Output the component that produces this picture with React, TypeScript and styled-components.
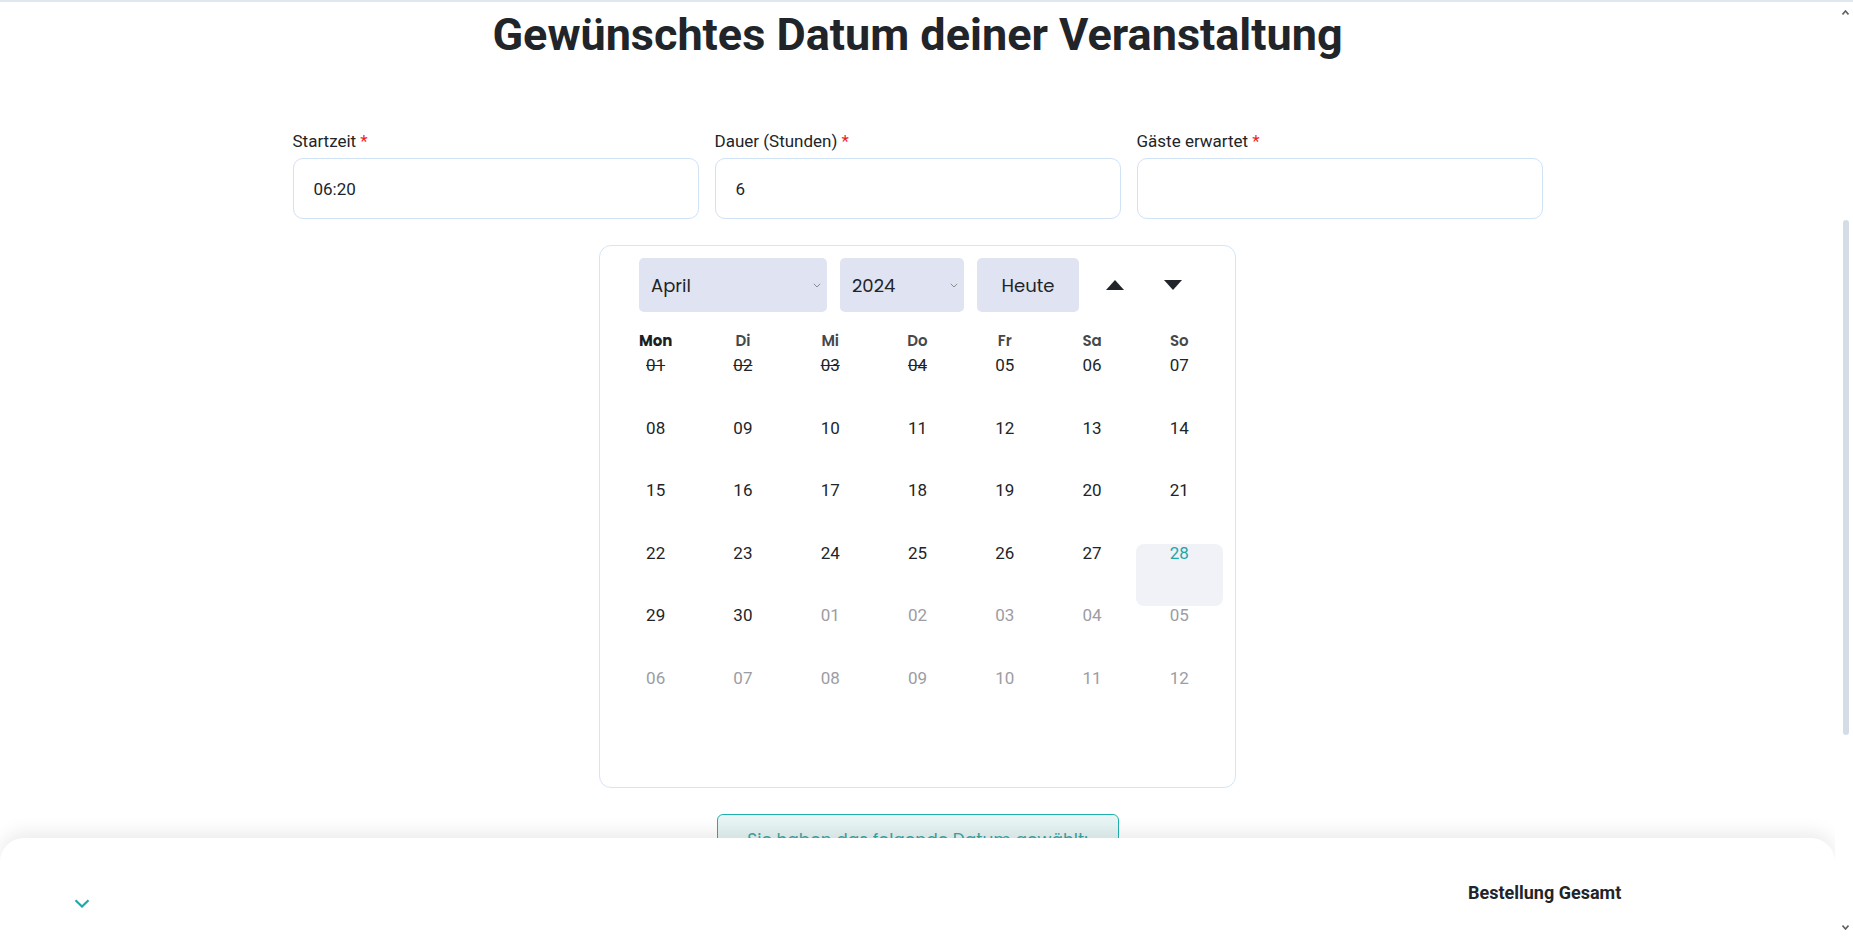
import styled, { createGlobalStyle } from "styled-components";

const GlobalStyle = createGlobalStyle`
  html, body {
    margin: 0;
    padding: 0;
    height: 100%;
    overflow: hidden;
    background: #fff;
  }
  body {
    font-family: Roboto, "Liberation Sans", sans-serif;
    color: #212529;
  }
  * {
    box-sizing: border-box;
  }
`;

const Shell = styled.div`
  display: flex;
  height: 100vh;
  border-top: 2px solid #dfe7ef;
`;

const Main = styled.main`
  flex: 1;
  margin-right: 3px;
  position: relative;
  overflow: hidden;
`;

const Title = styled.h1`
  margin: 6px 0 0;
  font: 700 45px/54px Roboto, "Liberation Sans", sans-serif;
  text-align: center;
  color: #212529;
`;

const FormRow = styled.div`
  max-width: 1250px;
  margin: 69px auto 0;
  display: grid;
  grid-template-columns: repeat(3, 1fr);
  gap: 16px;
`;

const Field = styled.label`
  display: flex;
  flex-direction: column;
`;

const LabelText = styled.span`
  font-size: 17px;
  line-height: 21px;
  margin-bottom: 6px;
  color: #212529;
`;

const Required = styled.span`
  color: #f01d1d;
  margin-left: 4px;
`;

const TextInput = styled.input`
  height: 61px;
  border: 1px solid #cfe2f6;
  border-radius: 10px;
  padding: 0 20px;
  font: 400 17px Roboto, "Liberation Sans", sans-serif;
  color: #212529;
  outline: none;
  background: #fff;
`;

const Calendar = styled.div`
  width: 637px;
  height: 543px;
  margin: 26px auto 0;
  border: 1px solid #d3e5f8;
  border-radius: 12px;
  padding: 12px 12px 0;
`;

const Toolbar = styled.div`
  display: flex;
  align-items: center;
  gap: 13px;
  padding-left: 27px;
`;

const SelectBox = styled.div<{ $width: number }>`
  width: ${(p) => p.$width}px;
  height: 54px;
  background: #e0e3f1;
  border-radius: 5px;
  display: flex;
  align-items: center;
  justify-content: space-between;
  padding: 0 6px 0 12px;
  font: 400 18px Poppins, Lato, "Noto Sans", sans-serif;
  color: #212529;
`;

const TodayButton = styled.button`
  width: 102px;
  height: 54px;
  border: none;
  background: #e0e3f1;
  border-radius: 5px;
  font: 400 18px Poppins, Lato, "Noto Sans", sans-serif;
  color: #212529;
  padding: 0;
`;

const ArrowButton = styled.button`
  width: 45px;
  height: 54px;
  border: none;
  background: none;
  padding: 0;
  display: flex;
  align-items: center;
  justify-content: center;
`;

const WeekRow = styled.div`
  margin-top: 17px;
  display: grid;
  grid-template-columns: repeat(7, 1fr);
`;

const WeekDay = styled.div<{ $first?: boolean }>`
  height: 22px;
  line-height: 22px;
  text-align: center;
  font: ${(p) => (p.$first ? 700 : 600)} 15px Poppins, Lato, "Noto Sans", sans-serif;
  color: ${(p) => (p.$first ? "#1d1f22" : "#45484c")};
`;

const DayGrid = styled.div`
  margin-top: 5px;
  display: grid;
  grid-template-columns: repeat(7, 1fr);
  grid-auto-rows: 62.6px;
`;

const DayCell = styled.div<{ $muted?: boolean; $struck?: boolean; $selected?: boolean }>`
  text-align: center;
  font-size: 17px;
  line-height: 18px;
  border-radius: 8px;
  color: ${(p) => (p.$selected ? "#22a6a6" : p.$muted ? "#9c9ca4" : "#212529")};
  background: ${(p) => (p.$selected ? "#f1f2f8" : "transparent")};
  text-decoration: ${(p) => (p.$struck ? "line-through" : "none")};
`;

const ChosenBox = styled.div`
  width: 402px;
  margin: 26px auto 0;
  border: 1px solid #20b0ae;
  border-radius: 6px;
  padding: 12px 0 20px;
  text-align: center;
  font: 400 17px/26px Poppins, Lato, "Noto Sans", sans-serif;
  color: #38a6a6;
  background: linear-gradient(#e8f5f4, #dbeeed);
`;

const Footer = styled.footer`
  position: absolute;
  left: 0;
  right: 0;
  bottom: 0;
  height: 100px;
  background: #fff;
  border-radius: 24px 24px 0 0;
  box-shadow: 0 -6px 18px rgba(0, 0, 0, 0.08);
  display: flex;
  align-items: flex-start;
  z-index: 2;
`;

const Toggle = styled.button`
  margin: 61px 0 0 74px;
  padding: 0;
  border: none;
  background: none;
  display: flex;
`;

const Summary = styled.div`
  margin-left: auto;
  width: 367px;
  margin-top: 44px;
  font: 700 18px/22px Roboto, "Liberation Sans", sans-serif;
  color: #212529;
`;

const ScrollTrack = styled.div`
  width: 15px;
  display: flex;
  flex-direction: column;
  align-items: center;
  padding: 8px 0;
`;

const Thumb = styled.div`
  width: 6px;
  height: 515px;
  margin-top: 205px;
  border-radius: 3px;
  background: #d4dde6;
`;

const Spacer = styled.div`
  flex: 1;
`;

const SelectChevron = () => (
  <svg width="8" height="5" viewBox="0 0 8 5">
    <path d="M0.8 0.8L4 4L7.2 0.8" stroke="#8c8c8c" strokeWidth="1" fill="none" />
  </svg>
);

const Triangle = ({ up }: { up?: boolean }) => (
  <svg width="18" height="10" viewBox="0 0 18 10">
    <polygon points={up ? "9,0 18,10 0,10" : "0,0 18,0 9,10"} fill="#212529" />
  </svg>
);

const ScrollArrow = ({ up }: { up?: boolean }) => (
  <svg width="7" height="5" viewBox="0 0 7 5">
    <path d={up ? "M0.5 4.5L3.5 1L6.5 4.5" : "M0.5 0.5L3.5 4L6.5 0.5"} stroke="#606060" strokeWidth="1.6" fill="none" />
  </svg>
);

const weekDays = ["Mon", "Di", "Mi", "Do", "Fr", "Sa", "So"];

type Day = { label: string; muted?: boolean; struck?: boolean; selected?: boolean };

const days: Day[] = [
  ...Array.from({ length: 30 }, (_, i) => ({
    label: String(i + 1).padStart(2, "0"),
    struck: i < 4,
    selected: i === 27,
  })),
  ...Array.from({ length: 12 }, (_, i) => ({
    label: String(i + 1).padStart(2, "0"),
    muted: true,
  })),
];

const App = (): JSX.Element => {
  return (
    <>
      <GlobalStyle />
      <Shell>
        <Main>
          <Title>Gewünschtes Datum deiner Veranstaltung</Title>
          <FormRow>
            <Field>
              <LabelText>
                Startzeit<Required>*</Required>
              </LabelText>
              <TextInput defaultValue="06:20" />
            </Field>
            <Field>
              <LabelText>
                Dauer (Stunden)<Required>*</Required>
              </LabelText>
              <TextInput defaultValue="6" />
            </Field>
            <Field>
              <LabelText>
                Gäste erwartet<Required>*</Required>
              </LabelText>
              <TextInput defaultValue="" />
            </Field>
          </FormRow>

          <Calendar>
            <Toolbar>
              <SelectBox $width={188}>
                April
                <SelectChevron />
              </SelectBox>
              <SelectBox $width={124}>
                2024
                <SelectChevron />
              </SelectBox>
              <TodayButton>Heute</TodayButton>
              <ArrowButton>
                <Triangle up />
              </ArrowButton>
              <ArrowButton>
                <Triangle />
              </ArrowButton>
            </Toolbar>
            <WeekRow>
              {weekDays.map((d, i) => (
                <WeekDay key={d} $first={i === 0}>
                  {d}
                </WeekDay>
              ))}
            </WeekRow>
            <DayGrid>
              {days.map((d, i) => (
                <DayCell key={i} $muted={d.muted} $struck={d.struck} $selected={d.selected}>
                  {d.label}
                </DayCell>
              ))}
            </DayGrid>
          </Calendar>

          <ChosenBox>Sie haben das folgende Datum gewählt:</ChosenBox>

          <Footer>
            <Toggle>
              <svg width="16" height="9" viewBox="0 0 16 9">
                <path d="M1.5 1.2L8 7.5L14.5 1.2" stroke="#1fa9a9" strokeWidth="2.2" fill="none" />
              </svg>
            </Toggle>
            <Summary>Bestellung Gesamt</Summary>
          </Footer>
        </Main>
        <ScrollTrack>
          <ScrollArrow up />
          <Thumb />
          <Spacer />
          <ScrollArrow />
        </ScrollTrack>
      </Shell>
    </>
  );
};

export default App;
